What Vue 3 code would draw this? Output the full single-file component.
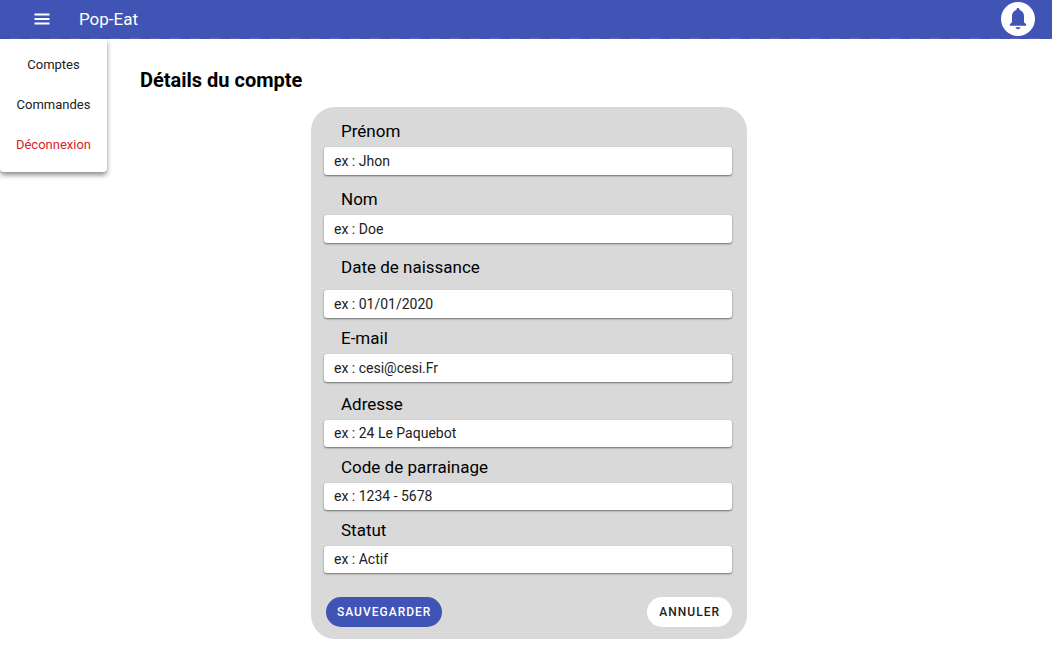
<script setup>
import { reactive } from 'vue'

const menu = [
  { label: 'Comptes' },
  { label: 'Commandes' },
  { label: 'Déconnexion', danger: true },
]

const fields = [
  { id: 'prenom', label: 'Prénom', placeholder: 'ex : Jhon' },
  { id: 'nom', label: 'Nom', placeholder: 'ex : Doe', variant: 'after-wide' },
  { id: 'naissance', label: 'Date de naissance', placeholder: 'ex : 01/01/2020', variant: 'after-wide roomy' },
  { id: 'email', label: 'E-mail', placeholder: 'ex : cesi@cesi.Fr' },
  { id: 'adresse', label: 'Adresse', placeholder: 'ex : 24 Le Paquebot', variant: 'after-medium compact' },
  { id: 'parrainage', label: 'Code de parrainage', placeholder: 'ex : 1234 - 5678', variant: 'compact' },
  { id: 'statut', label: 'Statut', placeholder: 'ex : Actif', variant: 'compact' },
]

const values = reactive({})
</script>

<template>
  <div class="page">
    <header class="bar">
      <button class="icon-button" type="button" aria-label="Menu">
        <svg width="16" height="12" viewBox="0 0 16 12" aria-hidden="true">
          <path d="M0.500 1.500h15M0.500 6h15M0.500 10.500h15" stroke="#fff" stroke-width="1.800" />
        </svg>
      </button>
      <span class="brand">Pop-Eat</span>
      <button class="bell" type="button" aria-label="Notifications">
        <svg width="18" height="22" viewBox="0 0 18 22" aria-hidden="true">
          <path
            fill="#3f54b4"
            d="M9 0c-.9 0-1.500.6-1.500 1.300v.6C4.700 2.600 3 5 3 7.800v6.400L.9 16.300v1.500h16.200v-1.500L15 14.200V7.800c0-2.800-1.700-5.200-4.500-5.900v-.6C10.500.6 9.900 0 9 0zM6.500 19.300c.3 1.200 1.300 2 2.500 2s2.200-.8 2.500-2z"
          />
        </svg>
      </button>
    </header>

    <nav class="menu">
      <a v-for="item in menu" :key="item.label" href="#" :class="{ danger: item.danger }">{{ item.label }}</a>
    </nav>

    <main class="content">
      <h1>Détails du compte</h1>
      <form class="card" @submit.prevent>
        <div v-for="field in fields" :key="field.id" class="field" :class="field.variant">
          <label :for="field.id">{{ field.label }}</label>
          <input :id="field.id" v-model="values[field.id]" type="text" :placeholder="field.placeholder" />
        </div>
        <div class="actions">
          <button class="pill primary" type="submit">SAUVEGARDER</button>
          <button class="pill" type="button">ANNULER</button>
        </div>
      </form>
    </main>
  </div>
</template>

<style>
body {
  background: #fff;
}
</style>

<style scoped>
.page {
  position: relative;
  font-family: Roboto, 'Liberation Sans', sans-serif;
  color: #000;
}

.page * {
  box-sizing: border-box;
}

button,
input {
  font-family: inherit;
  border: 0;
}

.bar {
  display: flex;
  align-items: center;
  height: 39px;
  padding: 0 17px 1px 30px;
  background: repeating-linear-gradient(90deg, #3f54b4 0 10px, #6562b8 10px 20px) bottom / 100% 1px no-repeat #3f54b4;
}

.icon-button {
  display: grid;
  place-items: center;
  width: 24px;
  height: 24px;
  padding: 0;
  background: none;
}

.brand {
  margin-left: 25px;
  font-size: 17px;
  line-height: 24px;
  color: #fff;
}

.bell {
  display: grid;
  place-items: center;
  width: 34px;
  height: 34px;
  margin-left: auto;
  padding: 0;
  border-radius: 50%;
  background: #fff;
}

.menu {
  position: absolute;
  top: 39px;
  left: 0;
  display: flex;
  flex-direction: column;
  width: 107px;
  padding: 6px 0 7px;
  background: #fff;
  border-radius: 0 0 4px 4px;
  box-shadow: 0 3px 5px rgba(0, 0, 0, 0.45);
}

.menu a {
  font-size: 13px;
  line-height: 40px;
  text-align: center;
  text-decoration: none;
  color: #212121;
}

.menu .danger {
  color: #d9232b;
}

.content {
  padding: 29px 134px 18px 140px;
}

h1 {
  margin: 0;
  font-size: 20px;
  line-height: 24px;
  font-weight: 700;
}

.card {
  max-width: 436px;
  margin: 15px auto 0;
  padding: 12px 15px 12px 13px;
  border-radius: 24px;
  background: #d9d9d9;
}

.field {
  display: flex;
  flex-direction: column;
  gap: 4px;
}

.field + .field {
  margin-top: 8px;
}

.field + .field.after-wide {
  margin-top: 12px;
}

.field + .field.after-medium {
  margin-top: 10px;
}

.field.roomy {
  gap: 11px;
}

label {
  padding-left: 17px;
  font-size: 17px;
  line-height: 24px;
}

input {
  width: 100%;
  height: 28px;
  padding: 0 10px 1px;
  border-radius: 3px;
  background: #fff;
  box-shadow: 0 1px 2px rgba(0, 0, 0, 0.5);
  font-size: 14px;
  color: #212121;
}

.compact input {
  height: 27px;
}

input::placeholder {
  color: #212121;
  opacity: 1;
}

.actions {
  display: flex;
  justify-content: space-between;
  margin-top: 24px;
  padding-left: 2px;
}

.pill {
  height: 30px;
  padding: 0 12px;
  border-radius: 15px;
  background: #fff;
  font-size: 12px;
  font-weight: 500;
  letter-spacing: 1px;
  color: #212121;
}

.primary {
  padding: 0 11px;
  background: #3f54b4;
  color: #fff;
}
</style>
